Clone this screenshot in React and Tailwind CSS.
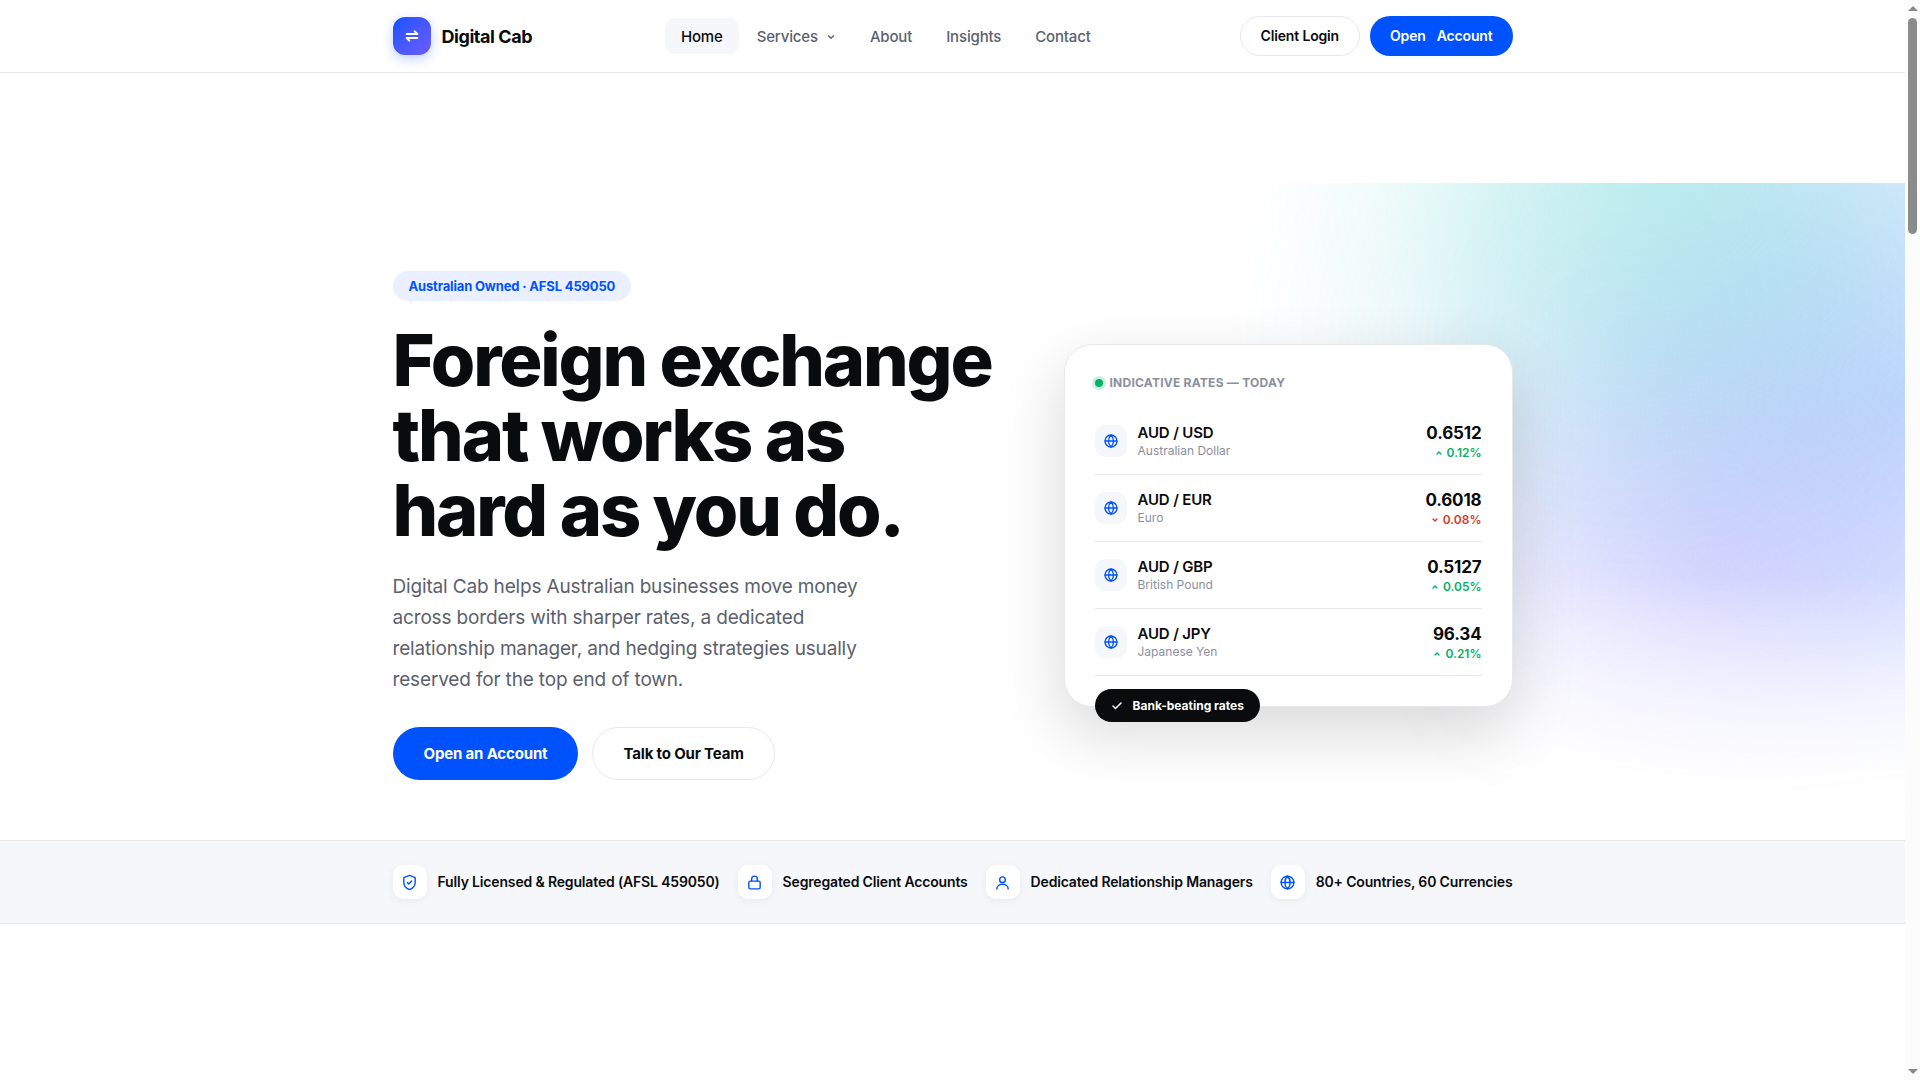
import { useState } from "react";

const navLinks = ["Home", "Services", "About", "Insights", "Contact"];

const rates = [
  { pair: "AUD / USD", name: "Australian Dollar", value: "0.6512", change: "0.12%", up: true },
  { pair: "AUD / EUR", name: "Euro", value: "0.6018", change: "0.08%", up: false },
  { pair: "AUD / GBP", name: "British Pound", value: "0.5127", change: "0.05%", up: true },
  { pair: "AUD / JPY", name: "Japanese Yen", value: "96.34", change: "0.21%", up: true },
];

const icons = {
  swap: <path d="M4 9h16l-4-4M20 15H4l4 4" />,
  down: <path d="M6 9l6 6 6-6" />,
  up: <path d="M6 15l6-6 6 6" />,
  check: <path d="M4 12l5 5L20 6" />,
  globe: (
    <>
      <circle cx="12" cy="12" r="9" />
      <path d="M3 12h18M12 3c2.5 2.5 3.8 5.6 3.8 9s-1.3 6.5-3.8 9c-2.5-2.5-3.8-5.6-3.8-9s1.3-6.5 3.8-9z" />
    </>
  ),
  shield: (
    <>
      <path d="M12 2l8 3v7c0 5-3.2 8.4-8 10-4.8-1.6-8-5-8-10V5z" />
      <path d="M9 12l2 2 4-4" />
    </>
  ),
  lock: (
    <>
      <rect x="4" y="10" width="16" height="11" rx="2" />
      <path d="M8 10V7a4 4 0 0 1 8 0v3" />
    </>
  ),
  user: (
    <>
      <circle cx="12" cy="8" r="4" />
      <path d="M4 21c0-4 3.6-6.5 8-6.5s8 2.5 8 6.5" />
    </>
  ),
};

const trustItems = [
  { icon: "shield", label: "Fully Licensed & Regulated (AFSL 459050)" },
  { icon: "lock", label: "Segregated Client Accounts" },
  { icon: "user", label: "Dedicated Relationship Managers" },
  { icon: "globe", label: "80+ Countries, 60 Currencies" },
];

const Icon = ({ name, className, stroke = 2 }) => (
  <svg
    viewBox="0 0 24 24"
    className={className}
    fill="none"
    stroke="currentColor"
    strokeWidth={stroke}
    strokeLinecap="round"
    strokeLinejoin="round"
    aria-hidden="true"
  >
    {icons[name]}
  </svg>
);

const Header = () => {
  const [active, setActive] = useState("Home");

  return (
    <header className="border-b border-[#e6e8eb] bg-white">
      <div className="mx-auto flex h-[72px] max-w-[1120px] items-center justify-between">
        <a href="#home" className="flex items-center gap-[11px]">
          <span className="flex size-[38px] items-center justify-center rounded-xl bg-linear-135 from-[#0052ff] to-[#6a5cff] text-white shadow-[0_4px_12px_rgba(0,82,255,0.25)]">
            <Icon name="swap" className="size-4" stroke={3} />
          </span>
          <span className="pt-0.5 text-lg font-bold tracking-tight">Digital Cab</span>
        </a>
        <nav className="flex items-center gap-0.5">
          {navLinks.map((link) => (
            <a
              key={link}
              href={`#${link.toLowerCase()}`}
              onClick={() => setActive(link)}
              className={`flex h-9 items-center gap-2 rounded-[10px] px-4 pt-0.5 text-[15px] font-medium ${
                active === link ? "bg-[#f5f7fa] text-[#0a0b0d]" : "text-[#5b616e]"
              }`}
            >
              {link}
              {link === "Services" && <Icon name="down" className="size-2.5" stroke={3} />}
            </a>
          ))}
        </nav>
        <div className="flex items-center gap-2.5">
          <button className="h-10 rounded-full border border-[#e6e8eb] bg-white px-5 text-sm font-semibold">
            Client Login
          </button>
          <button className="flex h-10 items-center gap-[11px] rounded-full bg-[#0052ff] px-5 text-sm font-semibold text-white">
            <span>Open</span>
            <span>Account</span>
          </button>
        </div>
      </div>
    </header>
  );
};

const RatesCard = () => (
  <div className="relative rounded-[28px] border border-[#e6e8eb] bg-white p-[30px] shadow-[0_24px_64px_rgba(10,11,13,0.16)]">
    <div className="mb-[18px] flex h-[15px] items-center gap-[7px] text-xs font-bold tracking-[0.02em] text-[#8a919e]">
      <span className="size-2 rounded-full bg-[#05b169] ring-3 ring-[#05b169]/20" />
      INDICATIVE RATES — TODAY
    </div>
    <ul>
      {rates.map((rate) => (
        <li key={rate.pair} className="flex h-[67px] items-center border-b border-[#e6e8eb]">
          <span className="mr-[11px] flex size-8 items-center justify-center rounded-[10px] bg-[#f5f7fa] text-[#0052ff]">
            <Icon name="globe" className="size-4" />
          </span>
          <div className="pt-0.5">
            <p className="text-[15px] leading-[18px] font-semibold">{rate.pair}</p>
            <p className="text-xs leading-[18px] tracking-normal text-[#8a919e]">{rate.name}</p>
          </div>
          <div className="ml-auto pt-1 text-right">
            <p className="text-[17px] leading-5 font-bold">{rate.value}</p>
            <p
              className={`flex items-center justify-end gap-1 text-xs leading-5 font-semibold tracking-normal ${
                rate.up ? "text-[#05b169]" : "text-[#d93a2b]"
              }`}
            >
              <Icon name={rate.up ? "up" : "down"} className="size-2" stroke={4} />
              {rate.change}
            </p>
          </div>
        </li>
      ))}
    </ul>
    <div className="absolute -bottom-4 left-[30px] flex h-[33px] items-center gap-2.5 rounded-full bg-[#0a0b0d] px-4 text-xs font-bold tracking-normal text-white">
      <Icon name="check" className="size-3" stroke={3} />
      Bank-beating rates
    </div>
  </div>
);

const Hero = () => (
  <section className="relative mt-[110px] overflow-hidden pt-[88px] pb-[60px]">
    {/* soft colour wash behind the card */}
    <div className="absolute inset-y-0 right-0 w-[680px] bg-[radial-gradient(circle_at_440px_0px,rgba(110,235,205,0.32),rgba(110,235,205,0.2)_160px,rgba(110,235,205,0.05)_300px,transparent_400px),radial-gradient(circle_at_490px_380px,rgba(190,150,255,0.24),rgba(180,150,255,0.15)_150px,rgba(180,150,255,0.04)_270px,transparent_360px),radial-gradient(circle_at_420px_160px,rgba(90,170,235,0.14),rgba(90,170,235,0.1)_180px,rgba(90,170,235,0.03)_310px,transparent_420px),radial-gradient(circle_at_690px_220px,rgba(50,120,255,0.28),rgba(60,120,255,0.17)_220px,rgba(70,120,255,0.05)_380px,transparent_500px)] [mask-image:linear-gradient(to_bottom,black_60%,rgba(0,0,0,0.55)_76%,rgba(0,0,0,0.12)_90%,transparent)]" />
    <div className="relative mx-auto grid max-w-[1120px] grid-cols-[1fr_449px] items-center">
      <div>
        <span className="flex h-[30px] w-fit items-center rounded-full bg-[#eaf0ff] px-4 pt-px text-[13px] font-bold text-[#0052ff]">
          Australian Owned · AFSL 459050
        </span>
        <h1 className="mt-[21px] text-[72px] leading-[75px] font-extrabold tracking-[-0.03em]">
          Foreign exchange
          <br />
          that works as
          <br />
          hard as you do.
        </h1>
        <p className="mt-6 max-w-[480px] text-[19px] leading-[31px] text-[#5b616e]">
          Digital Cab helps Australian businesses move money across borders with sharper rates, a
          dedicated relationship manager, and hedging strategies usually reserved for the top end of
          town.
        </p>
        <div className="mt-8 flex gap-3.5">
          <button className="h-[53px] rounded-full bg-[#0052ff] px-[31px] pt-0.5 text-[15px] font-bold text-white">
            Open an Account
          </button>
          <button className="h-[53px] rounded-full border border-[#e6e8eb] bg-white px-[30px] pt-0.5 text-[15px] font-bold">
            Talk to Our Team
          </button>
        </div>
      </div>
      <RatesCard />
    </div>
  </section>
);

const TrustBar = () => (
  <section className="border-y border-[#e6e8eb] bg-[#f5f7fa] py-6">
    <ul className="mx-auto flex max-w-[1120px] items-center justify-between">
      {trustItems.map((item) => (
        <li key={item.label} className="flex items-center gap-[11px] text-sm font-semibold">
          <span className="flex size-[34px] items-center justify-center rounded-[10px] bg-white text-[#0052ff] shadow-[0_2px_8px_rgba(10,11,13,0.06)]">
            <Icon name={item.icon} className="size-[17px]" />
          </span>
          {item.label}
        </li>
      ))}
    </ul>
  </section>
);

const ScrollRail = () => (
  <div className="flex w-[15px] shrink-0 flex-col items-center bg-[#fcfcfc] py-1.5" aria-hidden="true">
    <svg viewBox="0 0 10 5" className="h-[5px] w-2.5 fill-[#8b8b8b]">
      <path d="M5 0l5 5H0z" />
    </svg>
    <div className="mt-[7px] h-[216px] w-[9px] rounded-full bg-[#8b8b8b]" />
    <svg viewBox="0 0 10 5" className="mt-auto h-[5px] w-2.5 fill-[#8b8b8b]">
      <path d="M0 0h10L5 5z" />
    </svg>
  </div>
);

const App = () => (
  <div className="flex h-screen bg-white font-['Inter',sans-serif] tracking-[-0.01em] text-[#0a0b0d]">
    <div className="min-w-0 flex-1 overflow-hidden">
      <Header />
      <main>
        <Hero />
        <TrustBar />
      </main>
    </div>
    <ScrollRail />
  </div>
);

export default App;
